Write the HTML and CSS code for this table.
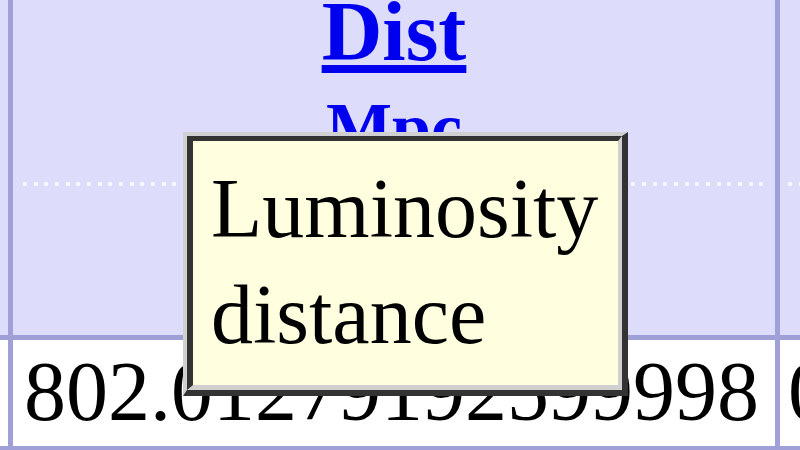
FILE: index.html
```html
<!DOCTYPE html>
<html>
<head>
<meta charset="utf-8">
<title>Dist Mpc</title>
<link rel="stylesheet" href="styles.css">
</head>
<body>
<div class="grid">
  <div class="cell head"></div>
  <div class="cell head head-main">
    <a class="sort-link" href="#">Dist</a>
    <div class="unit">Mpc</div>
    <div class="dots"></div>
  </div>
  <div class="cell head head-next">
    <div class="unit-spacer"></div>
    <div class="dots dots-next"></div>
  </div>
  <div class="cell data"></div>
  <div class="cell data data-main">802.01279192599998</div>
  <div class="cell data data-next">0.178</div>
</div>
<div class="tooltip">
  <div class="tooltip-inner">Luminosity distance</div>
</div>
</body>
</html>
```
FILE: styles.css
```css
html, body {
  margin: 0;
  padding: 0;
  width: 800px;
  height: 450px;
  overflow: hidden;
  background: #ffffff;
  font-family: "Liberation Serif", "Times New Roman", serif;
}

.grid {
  display: grid;
  grid-template-columns: 8px 762px 220px;
  grid-template-rows: 352px 106px;
  column-gap: 5px;
  row-gap: 5px;
  padding-bottom: 5px;
  margin-top: -17px;
  background: #a0a0d8;
  width: 1000px;
}

.cell {
  font-size: 84px;
  overflow: hidden;
}

.head {
  background: #ddddfb;
}

.head-main {
  display: flex;
  flex-direction: column;
  align-items: center;
  padding: 0 10px 0 10px;
}

.sort-link {
  display: block;
  font-weight: bold;
  color: #0000ee;
  text-decoration: underline;
  line-height: normal;
}

.unit {
  margin-top: 8px;
  font-size: 70px;
  font-weight: bold;
  color: #0000ee;
  line-height: normal;
}

.dots {
  align-self: stretch;
  margin-top: 14px;
  height: 4px;
  background: repeating-linear-gradient(to right, #f6f6fe 0, #f6f6fe 4px, transparent 4px, transparent 10.67px);
}

.head-next {
  display: flex;
  flex-direction: column;
  padding: 0 8px;
}

.unit-spacer {
  height: 199px;
}

.dots-next {
  margin-top: 0;
}

.data {
  background: #ffffff;
}

.data-main {
  padding: 3px 11px 0 11px;
  white-space: nowrap;
  color: #000;
  line-height: normal;
}

.data-next {
  padding: 3px 8px 0 8px;
  white-space: nowrap;
  color: #000;
  line-height: normal;
}

.tooltip {
  position: absolute;
  left: 183px;
  top: 132px;
  border-style: solid;
  border-width: 4px 6px 6px 4px;
  border-color: #d0d0d0 #333333 #333333 #d0d0d0;
  z-index: 10;
}

.tooltip-inner {
  width: 389px;
  height: 229px;
  padding: 15px 18px 0 18px;
  border-style: solid;
  border-width: 5px 4px 5px 6px;
  border-color: #333333 #d0d0d0 #d0d0d0 #333333;
  background: #ffffe0;
  font-size: 84px;
  line-height: 106px;
  color: #000;
}
```
